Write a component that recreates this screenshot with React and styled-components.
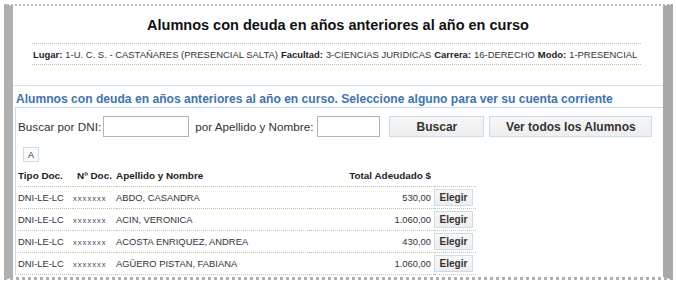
import React from "react";
import styled, { createGlobalStyle } from "styled-components";

const Global = createGlobalStyle`
  html, body { margin: 0; padding: 0; background: #ffffff; }
  body { font-family: "Liberation Sans", Arial, sans-serif; color: #222; }
  * { box-sizing: border-box; }
`;

const Frame = styled.div`
  margin: 4px 3px 5px 4px;
  width: 669px;
  height: 276px;
  border-left: 9px solid #b0b0b0;
  border-right: 10px solid #a8a8a8;
  border-top: 2px dotted #b8b8b8;
  border-bottom: 3px dotted #b0b0b0;
  background: #fff;
  overflow: hidden;
  display: flex;
  flex-direction: column;
`;

const Title = styled.h1`
  margin: 10px 0 0;
  font-size: 14.5px;
  line-height: 18px;
  font-weight: bold;
  text-align: center;
  color: #111;
`;

const InfoBar = styled.div`
  margin: 9px 22px 0 19px;
  border-top: 1px dotted #c9c79a;
  border-bottom: 1px dotted #c9c79a;
  height: 22px;
  display: flex;
  align-items: center;
  font-size: 9.45px;
  color: #333;
  white-space: nowrap;
  padding-left: 1px;
`;

const Label = styled.b`
  margin-right: 3px;
  color: #222;
`;

const Value = styled.span`
  margin-right: 3px;
`;

const Section = styled.section`
  margin-top: 20px;
  border-top: 1px solid #d4e3f1;
  padding-left: 2px;
  display: flex;
  flex-direction: column;
`;

const Heading = styled.h2`
  margin: 0;
  padding: 6px 0 0 1px;
  font-size: 12.1px;
  line-height: 15px;
  font-weight: bold;
  color: #3c74b8;
  white-space: nowrap;
`;

const Box = styled.div`
  border-top: 1px solid #c8dcef;
  border-left: 1px solid #c8dcef;
  padding: 8px 0 0 2px;
  display: flex;
  flex-direction: column;
`;

const SearchRow = styled.div`
  display: flex;
  align-items: center;
  font-size: 11.7px;
  color: #333;
  height: 21px;
  white-space: nowrap;
`;

const Input = styled.input`
  height: 21px;
  width: ${(p) => p.$w}px;
  border: 1px solid #b4b4b4;
  margin: 0 ${(p) => p.$mr}px 0 ${(p) => p.$ml}px;
  padding: 0;
  background: #fff;
`;

const Button = styled.button`
  height: 21px;
  width: ${(p) => p.$w}px;
  margin-right: ${(p) => p.$mr || 0}px;
  border: 1px solid #c9dcee;
  background: linear-gradient(#f6f6f6, #eeeeee);
  font-family: "Liberation Sans", Arial, sans-serif;
  font-weight: bold;
  font-size: 12px;
  color: #333;
  padding: 0;
`;

const LetterButton = styled.button`
  margin: 10px 0 0 5px;
  width: 16px;
  height: 15px;
  border: 1px solid #c9dcee;
  background: #fbfbfb;
  font-family: "Liberation Sans", Arial, sans-serif;
  font-size: 9px;
  color: #333;
  padding: 0;
  align-self: flex-start;
`;

const Table = styled.table`
  margin-top: 4px;
  border-collapse: collapse;
  width: 458px;
  font-size: 9.4px;
  color: #333;
`;

const Th = styled.th`
  text-align: ${(p) => (p.$right ? "right" : "left")};
  font-weight: bold;
  font-size: 9.9px;
  color: #222;
  height: 20px;
  padding: 0 ${(p) => (p.$right ? "3px" : "0")} 0 ${(p) => p.$pl || 0}px;
  width: ${(p) => (p.$w ? p.$w + "px" : "auto")};
  white-space: nowrap;
`;

const Tr = styled.tr`
  border-top: 1px dotted #c9c79a;
  border-bottom: 1px dotted #c9c79a;
  height: 22px;
`;

const Td = styled.td`
  text-align: ${(p) => (p.$right ? "right" : "left")};
  padding: 0 ${(p) => (p.$right ? "3px" : "0")} 0 0;
  white-space: nowrap;
`;

const DocNumber = styled.span`
  font-size: 7.6px;
  letter-spacing: 1px;
  color: #444;
`;

const Elegir = styled.button`
  height: 17px;
  width: 39px;
  border: 1px solid #c9dcee;
  background: linear-gradient(#f8f8f8, #eeeeee);
  font-family: "Liberation Sans", Arial, sans-serif;
  font-weight: bold;
  font-size: 10px;
  color: #333;
  padding: 0;
  display: block;
`;

const rows = [
  ["DNI-LE-LC", "xxxxxxx", "ABDO, CASANDRA", "530,00"],
  ["DNI-LE-LC", "xxxxxxx", "ACIN, VERONICA", "1.060,00"],
  ["DNI-LE-LC", "xxxxxxx", "ACOSTA ENRIQUEZ, ANDREA", "430,00"],
  ["DNI-LE-LC", "xxxxxxx", "AGÜERO PISTAN, FABIANA", "1.060,00"],
];

export default function App() {
  return (
    <>
      <Global />
      <Frame>
        <Title>Alumnos con deuda en años anteriores al año en curso</Title>
        <InfoBar>
          <Label>Lugar:</Label>
          <Value>1-U. C. S. - CASTAÑARES (PRESENCIAL SALTA)</Value>
          <Label>Facultad:</Label>
          <Value>3-CIENCIAS JURIDICAS</Value>
          <Label>Carrera:</Label>
          <Value>16-DERECHO</Value>
          <Label>Modo:</Label>
          <Value>1-PRESENCIAL</Value>
        </InfoBar>
        <Section>
          <Heading>
            Alumnos con deuda en años anteriores al año en curso. Seleccione alguno para ver su cuenta corriente
          </Heading>
          <Box>
            <SearchRow>
              Buscar por DNI:
              <Input $w={86} $ml={2} $mr={6} />
              por Apellido y Nombre:
              <Input $w={63} $ml={4} $mr={9} />
              <Button $w={95} $mr={5}>Buscar</Button>
              <Button $w={163}>Ver todos los Alumnos</Button>
            </SearchRow>
            <LetterButton>A</LetterButton>
            <Table>
              <thead>
                <tr>
                  <Th $w={55}>Tipo Doc.</Th>
                  <Th $w={43} $pl={4}>Nº Doc.</Th>
                  <Th>Apellido y Nombre</Th>
                  <Th $right>Total Adeudado $</Th>
                  <Th $w={42}></Th>
                </tr>
              </thead>
              <tbody>
                {rows.map((r, i) => (
                  <Tr key={i}>
                    <Td>{r[0]}</Td>
                    <Td>
                      <DocNumber>{r[1]}</DocNumber>
                    </Td>
                    <Td>{r[2]}</Td>
                    <Td $right>{r[3]}</Td>
                    <Td>
                      <Elegir>Elegir</Elegir>
                    </Td>
                  </Tr>
                ))}
              </tbody>
            </Table>
          </Box>
        </Section>
      </Frame>
    </>
  );
}
